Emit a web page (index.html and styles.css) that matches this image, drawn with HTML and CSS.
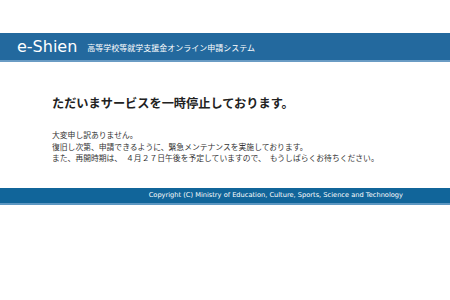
FILE: index.html
```html
<!DOCTYPE html>
<html lang="ja">

<head>
  <meta charset="UTF-8" />
  <meta name="viewport" content="width=device-width, initial-scale=1.0" />
  <title>e-Shien 高等学校等就学支援金オンライン申請システム</title>
  <link rel="stylesheet" href="styles.css">
</head>

<body>
  <div class="page">
    <header class="site_header">
      <span class="logo">e-Shien</span>
      <span class="system_name">高等学校等就学支援金オンライン申請システム</span>
    </header>

    <main class="notice">
      <h1 class="notice_title">ただいまサービスを一時停止しております。</h1>
      <p class="notice_text">
        大変申し訳ありません。<br>
        復旧し次第、申請できるように、緊急メンテナンスを実施しております。<br>
        また、再開時期は、　４月２７日午後を予定していますので、　もうしばらくお待ちください。
      </p>
    </main>

    <footer class="site_footer">
      <p class="copyright">Copyright (C) Ministry of Education, Culture, Sports, Science and Technology</p>
    </footer>
  </div>
</body>

</html>
```

FILE: styles.css
```css
body {
  margin: 0;
  background-color: #fff;
  font-family: 'Noto Sans CJK JP', sans-serif;
  color: #333;
}

.page {
  padding-top: 33px;
}

.site_header {
  display: flex;
  align-items: center;
  height: 27px;
  padding-left: 17px;
  background-color: #23699e;
  border-bottom: 2px solid #6a9cc4;
  color: #fff;
}

.logo {
  font-family: 'DejaVu Sans', sans-serif;
  font-size: 16px;
  line-height: 1;
}

.system_name {
  margin-left: 10px;
  margin-top: 3px;
  font-size: 8px;
  line-height: 1;
}

.notice {
  padding: 33px 0 0 52px;
  height: 93px;
}

.notice_title {
  margin: 0;
  font-size: 12.2px;
  font-weight: bold;
  line-height: 16px;
  color: #222;
}

.notice_text {
  margin: 18px 0 0;
  font-size: 7.8px;
  line-height: 11.5px;
}

.site_footer {
  height: 15px;
  display: flex;
  align-items: center;
  justify-content: flex-end;
  padding-right: 47px;
  background-color: #11659a;
  border-bottom: 2px solid #5d97c2;
  color: #fff;
}

.copyright {
  margin: 0;
  font-family: 'DejaVu Sans', sans-serif;
  font-size: 6.65px;
  line-height: 1;
}
```
